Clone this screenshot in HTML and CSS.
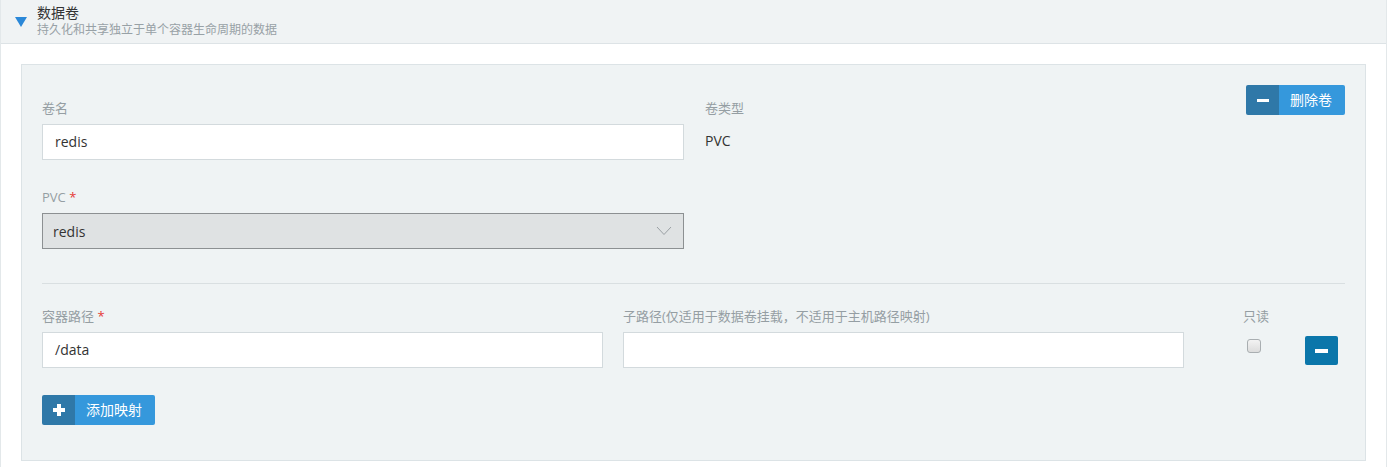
FILE: index.html
```html
<!DOCTYPE html>
<html lang="zh-CN">
<head>
<meta charset="utf-8">
<title>数据卷</title>
<link rel="stylesheet" href="styles.css">
</head>
<body>
<div class="panel">
  <div class="panel-head">
    <svg class="caret" width="12" height="10" viewBox="0 0 12 10"><polygon points="0,0 12,0 6,10" fill="#2b88d8"/></svg>
    <div class="head-text">
      <div class="title">数据卷</div>
      <div class="subtitle">持久化和共享独立于单个容器生命周期的数据</div>
    </div>
  </div>
  <div class="panel-body">
    <div class="card">
      <div class="row-top">
        <div class="field">
          <div class="label">卷名</div>
          <div class="input">redis</div>
        </div>
        <div class="field">
          <div class="label">卷类型</div>
          <div class="static">PVC</div>
        </div>
        <button class="btn btn-split">
          <span class="btn-icon"><span class="bar"></span></span>
          <span class="btn-text">删除卷</span>
        </button>
      </div>
      <div class="row-pvc">
        <div class="field">
          <div class="label">PVC <span class="req">*</span></div>
          <div class="select">
            <span>redis</span>
            <svg class="chev" width="16" height="10" viewBox="0 0 16 10"><polyline points="1,1 8,8.5 15,1" fill="none" stroke="#9aa0a4" stroke-width="1"/></svg>
          </div>
        </div>
      </div>
      <div class="divider"></div>
      <div class="row-mount">
        <div class="field">
          <div class="label">容器路径 <span class="req">*</span></div>
          <div class="input">/data</div>
        </div>
        <div class="field">
          <div class="label">子路径(仅适用于数据卷挂载，不适用于主机路径映射)</div>
          <div class="input"></div>
        </div>
        <div class="field-ro">
          <div class="ro-col">
            <div class="label">只读</div>
            <span class="checkbox"></span>
          </div>
          <button class="btn-remove"><span class="bar bar-lg"></span></button>
        </div>
      </div>
      <button class="btn btn-split btn-add">
        <span class="btn-icon">
          <svg width="12" height="12" viewBox="0 0 12 12"><rect x="4" y="0" width="4" height="12" fill="#fff"/><rect x="0" y="4" width="12" height="4" fill="#fff"/></svg>
        </span>
        <span class="btn-text">添加映射</span>
      </button>
    </div>
  </div>
</div>
</body>
</html>
```
FILE: styles.css
```css
* { box-sizing: border-box; }
html, body { margin: 0; padding: 0; background: #fff; }
body {
  font-family: "Open Sans", "Noto Sans CJK SC", sans-serif;
  color: #333;
  font-size: 14px;
}
.panel {
  margin-right: 2px;
  border-left: 1px solid #e3e8ea;
  border-right: 1px solid #e3e8ea;
  height: 467px;
}
.panel-head {
  height: 44px;
  background: #f0f3f4;
  border-bottom: 1px solid #dde3e6;
  display: flex;
  align-items: flex-start;
  padding-left: 14px;
}
.caret { margin-top: 17px; flex: none; }
.head-text { margin-left: 10px; padding-top: 4px; }
.title { font-size: 14px; line-height: 18px; color: #333; }
.subtitle { font-size: 12px; line-height: 16px; color: #98a1a6; margin-top: 0; }
.panel-body { padding: 20px 20px 0 20px; }
.card {
  background: #eff3f4;
  border: 1px solid #dce3e6;
  padding: 20px 20px 35px 20px;
}
.row-top {
  display: grid;
  grid-template-columns: 642px 1fr auto;
  column-gap: 21px;
  align-items: start;
}
.row-top .field { padding-top: 14px; }
.label {
  font-size: 13px;
  line-height: 18px;
  color: #959ea3;
  margin-bottom: 7px;
}
.req { color: #e53935; }
.input {
  height: 36px;
  background: #fff;
  border: 1px solid #d3dadd;
  padding: 0 12px;
  line-height: 34px;
  font-size: 14px;
  color: #333;
}
.static { font-size: 14px; line-height: 34px; color: #333; }
.row-pvc { width: 642px; margin-top: 28px; }
.select {
  height: 36px;
  background: #dfe2e3;
  border: 1px solid #8c9092;
  padding: 0 10px 0 10px;
  display: flex;
  align-items: center;
  justify-content: space-between;
  font-size: 14px;
  color: #333;
}
.chev { margin-right: 1px; }
.divider { height: 1px; background: #d9dfe1; margin-top: 34px; }
.row-mount {
  display: grid;
  grid-template-columns: 1fr 1fr 141px;
  column-gap: 20px;
  margin-top: 23px;
}
.field-ro {
  display: flex;
  justify-content: space-between;
  align-items: flex-start;
  padding-left: 39px;
  padding-right: 7px;
}
.ro-col { display: flex; flex-direction: column; align-items: flex-start; }
.checkbox {
  display: block;
  width: 14px;
  height: 14px;
  margin-top: 7px;
  margin-left: 4px;
  border: 1px solid #a9aeb1;
  border-radius: 3px;
  background: linear-gradient(#f3f3f3, #dcdcdc);
}
.btn-remove {
  margin-top: 29px;
  width: 33px;
  height: 29px;
  border: none;
  border-radius: 2px;
  background: #0b76aa;
  display: flex;
  align-items: center;
  justify-content: center;
  padding: 0;
}
.btn {
  border: none;
  padding: 0;
  height: 30px;
  display: inline-flex;
  border-radius: 2px;
  overflow: hidden;
  font-family: inherit;
  cursor: pointer;
}
.btn-icon {
  width: 33px;
  background: #2f78a8;
  display: flex;
  align-items: center;
  justify-content: center;
}
.btn-text {
  background: #3598dc;
  color: #fff;
  font-size: 14px;
  line-height: 30px;
  padding: 0 13px 0 11px;
}
.bar { display: block; width: 12px; height: 3px; background: #fff; }
.bar-lg { width: 13px; height: 4px; }
.btn-add { margin-top: 27px; }
```
